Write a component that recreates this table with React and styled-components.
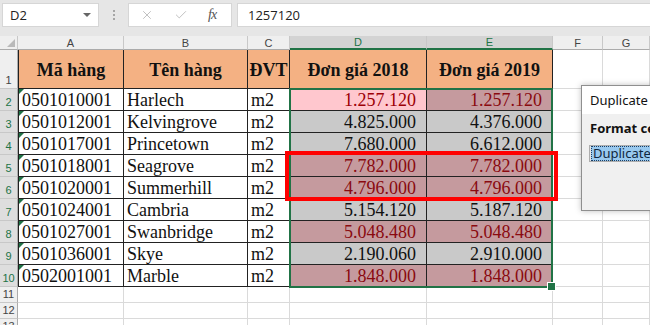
import React from 'react';
import styled, { createGlobalStyle } from 'styled-components';
import { X, Check } from 'lucide-react';

const GlobalStyle = createGlobalStyle`
  html, body { margin: 0; padding: 0; background: #fff; overflow: hidden; }
  * { box-sizing: border-box; }
`;

const Page = styled.div`
  width: 650px;
  height: 325px;
  overflow: hidden;
  position: relative;
  font-family: "Liberation Sans", Arial, sans-serif;
`;

const FormulaBar = styled.div`
  height: 36px;
  background: #e6e6e6;
  display: flex;
  align-items: flex-start;
  padding: 3px 0 0 2px;
`;

const NameBox = styled.div`
  width: 97px;
  height: 24px;
  background: #fff;
  border: 1px solid #d6d6d6;
  display: flex;
  align-items: center;
  justify-content: space-between;
  padding: 0 7px 0 7px;
  font-family: "Open Sans", "Noto Sans", sans-serif;
  font-size: 13px;
  color: #222;
`;

const DropArrow = styled.span`
  width: 0;
  height: 0;
  border-left: 4px solid transparent;
  border-right: 4px solid transparent;
  border-top: 4px solid #666;
`;

const Grip = styled.div`
  width: 29px;
  height: 24px;
  display: flex;
  flex-direction: column;
  align-items: center;
  justify-content: center;
  gap: 2px;

  span {
    width: 2px;
    height: 2px;
    background: #a6a6a6;
  }
`;

const FxBox = styled.div`
  width: 104px;
  height: 24px;
  background: #fff;
  border: 1px solid #d6d6d6;
  display: flex;
  align-items: center;
  padding-left: 11px;
  gap: 20px;
  color: #b3b3b3;
`;

const FxLabel = styled.span`
  font-family: "Liberation Serif", serif;
  font-style: italic;
  font-size: 14px;
  color: #555;
  letter-spacing: -1px;
`;

const FormulaInput = styled.div`
  flex: 1;
  height: 24px;
  margin-left: 5px;
  background: #fff;
  border: 1px solid #d6d6d6;
  border-right: none;
  display: flex;
  align-items: center;
  padding-left: 10px;
  font-family: "Open Sans", "Noto Sans", sans-serif;
  font-size: 13px;
  color: #222;
`;

const Sheet = styled.div`
  display: grid;
  grid-template-columns: 18px 106px 124px 42px 137px 126px 50px 1fr;
  grid-template-rows: 14px 39px repeat(9, 22px) 16px 16px 16px;
  position: relative;
`;

const Corner = styled.div`
  background: #efefef;
  border-right: 1px solid #c8c8c8;
  border-bottom: 1px solid #ababab;
  position: relative;

  &::after {
    content: '';
    position: absolute;
    right: 2px;
    bottom: 2px;
    width: 0;
    height: 0;
    border-left: 8px solid transparent;
    border-bottom: 8px solid #b9b9b9;
  }
`;

const ColHeader = styled.div`
  background: ${({ $active }) => ($active ? '#d3d3d3' : '#efefef')};
  color: ${({ $active }) => ($active ? '#217346' : '#444')};
  border-right: 1px solid #c8c8c8;
  border-bottom: ${({ $active }) => ($active ? '2px solid #217346' : '1px solid #ababab')};
  font-size: 11px;
  display: flex;
  align-items: center;
  justify-content: center;
  line-height: 12px;
`;

const RowHeader = styled.div`
  background: ${({ $active }) => ($active ? '#dedede' : '#efefef')};
  color: ${({ $active }) => ($active ? '#217346' : '#444')};
  border-right: 1px solid #ababab;
  border-bottom: 1px solid #c8c8c8;
  font-size: 11px;
  display: flex;
  align-items: flex-end;
  justify-content: center;
  padding-bottom: 1px;
  line-height: 13px;
`;

const HeadCell = styled.div`
  background: #f4b183;
  border-right: 1px solid #222;
  border-bottom: 1px solid #222;
  border-left: ${({ $first }) => ($first ? '1px solid #222' : 'none')};
  display: flex;
  align-items: center;
  justify-content: center;
  padding-top: 2px;
  font-family: "Liberation Serif", "Times New Roman", serif;
  font-weight: bold;
  font-size: 18px;
  color: #111;
  white-space: nowrap;
`;

const TextCell = styled.div`
  position: relative;
  border-right: 1px solid #222;
  border-bottom: 1px solid #222;
  border-left: ${({ $first }) => ($first ? '1px solid #222' : 'none')};
  display: flex;
  align-items: flex-end;
  padding-left: 3px;
  font-family: "Liberation Serif", "Times New Roman", serif;
  font-size: 18px;
  line-height: 20px;
  color: #111;
  white-space: nowrap;

  &::before {
    content: '';
    display: ${({ $flag }) => ($flag ? 'block' : 'none')};
    position: absolute;
    left: 0;
    top: 0;
    width: 0;
    height: 0;
    border-top: 5px solid #1e7145;
    border-right: 5px solid transparent;
  }
`;

const priceTone = {
  active: { bg: '#ffc7ce', fg: '#9c0006' },
  dup: { bg: '#c59a9e', fg: '#8a0a10' },
  plain: { bg: '#c9c9c9', fg: '#111' },
};

const PriceCell = styled.div`
  background: ${({ $tone }) => priceTone[$tone].bg};
  color: ${({ $tone }) => priceTone[$tone].fg};
  border-right: 1px solid #222;
  border-bottom: 1px solid #222;
  display: flex;
  align-items: flex-end;
  justify-content: flex-end;
  padding-right: 10px;
  font-family: "Liberation Serif", "Times New Roman", serif;
  font-size: 18px;
  line-height: 20px;
  white-space: nowrap;
`;

const EmptyCell = styled.div`
  border-right: 1px solid #dadada;
  border-bottom: 1px solid #dadada;
`;

/* absolutely positioned grid children take their grid area as containing block
   and stay out of auto-placement */
const SelectionFrame = styled.div`
  position: absolute;
  grid-column: 5 / 7;
  grid-row: 3 / 12;
  inset: -1px 0 -1px -1px;
  border: 2px solid #217346;
  z-index: 2;
  pointer-events: none;

  &::after {
    content: '';
    position: absolute;
    right: -5px;
    bottom: -5px;
    width: 7px;
    height: 7px;
    background: #217346;
    border: 1px solid #fff;
  }
`;

const DupHighlight = styled.div`
  position: absolute;
  grid-column: 5 / 7;
  grid-row: 6 / 8;
  inset: -4px -5px -2px -5px;
  border: 4px solid #ff0000;
  z-index: 3;
  pointer-events: none;
`;

const Dialog = styled.div`
  position: absolute;
  left: 581px;
  top: 49px;
  width: 160px;
  height: 126px;
  background: #f0f0f0;
  border: 1px solid #8f8f8f;
  box-shadow: 0 0 6px rgba(0, 0, 0, 0.25);
  z-index: 4;
  font-family: "Noto Sans", "Open Sans", sans-serif;
  font-size: 13px;
  color: #111;
`;

const DialogTitle = styled.div`
  height: 28px;
  background: #fff;
  display: flex;
  align-items: center;
  padding-left: 8px;
  white-space: nowrap;
`;

const DialogBody = styled.div`
  padding: 6px 0 0 8px;
  display: flex;
  flex-direction: column;
  gap: 8px;
  white-space: nowrap;
`;

const DialogLabel = styled.div`
  font-weight: bold;
  line-height: 17px;
`;

const Combo = styled.div`
  margin-left: -1px;
  height: 17px;
  background: #e5e5e5;
  border: 1px solid #adadad;
  display: flex;
  align-items: center;
  padding-left: 1px;
`;

const ComboValue = styled.span`
  background: #99c9ef;
  border: 1px dotted #1a3f66;
  line-height: 13px;
  padding: 0 3px 0 1px;
  color: #0f2740;
`;

const columns = ['A', 'B', 'C', 'D', 'E', 'F', 'G'];
const headings = ['Mã hàng', 'Tên hàng', 'ĐVT', 'Đơn giá 2018', 'Đơn giá 2019'];

const items = [
  ['0501010001', 'Harlech', '1.257.120', '1.257.120', true],
  ['0501012001', 'Kelvingrove', '4.825.000', '4.376.000', false],
  ['0501017001', 'Princetown', '7.680.000', '6.612.000', false],
  ['0501018001', 'Seagrove', '7.782.000', '7.782.000', true],
  ['0501020001', 'Summerhill', '4.796.000', '4.796.000', true],
  ['0501024001', 'Cambria', '5.154.120', '5.187.120', false],
  ['0501027001', 'Swanbridge', '5.048.480', '5.048.480', true],
  ['0501036001', 'Skye', '2.190.060', '2.910.000', false],
  ['0502001001', 'Marble', '1.848.000', '1.848.000', true],
];

export default function App() {
  return (
    <Page>
      <GlobalStyle />
      <FormulaBar>
        <NameBox>
          D2
          <DropArrow />
        </NameBox>
        <Grip>
          <span />
          <span />
          <span />
        </Grip>
        <FxBox>
          <X size={14} strokeWidth={1.4} />
          <Check size={14} strokeWidth={1.4} />
          <FxLabel>fx</FxLabel>
        </FxBox>
        <FormulaInput>1257120</FormulaInput>
      </FormulaBar>

      <Sheet>
        <Corner />
        {columns.map((c) => (
          <ColHeader key={c} $active={c === 'D' || c === 'E'}>
            {c}
          </ColHeader>
        ))}

        <RowHeader>1</RowHeader>
        {headings.map((h, i) => (
          <HeadCell key={h} $first={i === 0}>
            {h}
          </HeadCell>
        ))}
        <EmptyCell />
        <EmptyCell />

        {items.map(([code, name, p18, p19, dup], i) => (
          <React.Fragment key={code}>
            <RowHeader $active>{i + 2}</RowHeader>
            <TextCell $first $flag>
              {code}
            </TextCell>
            <TextCell>{name}</TextCell>
            <TextCell>m2</TextCell>
            <PriceCell $tone={i === 0 ? 'active' : dup ? 'dup' : 'plain'}>{p18}</PriceCell>
            <PriceCell $tone={dup ? 'dup' : 'plain'}>{p19}</PriceCell>
            <EmptyCell />
            <EmptyCell />
          </React.Fragment>
        ))}

        {[11, 12, 13].map((n) => (
          <React.Fragment key={n}>
            <RowHeader>{n}</RowHeader>
            {columns.map((c) => (
              <EmptyCell key={c} />
            ))}
          </React.Fragment>
        ))}

        <SelectionFrame />
        <DupHighlight />

        <Dialog>
          <DialogTitle>Duplicate Values</DialogTitle>
          <DialogBody>
            <DialogLabel>Format cells that contain:</DialogLabel>
            <Combo>
              <ComboValue>Duplicate</ComboValue>
            </Combo>
          </DialogBody>
        </Dialog>
      </Sheet>
    </Page>
  );
}
